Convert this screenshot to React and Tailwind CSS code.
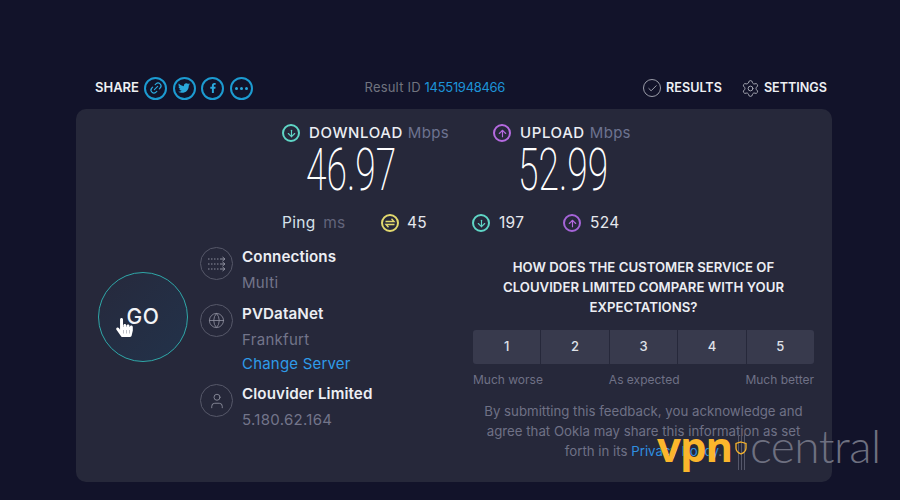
import { Link2, Check, Settings, ArrowDown, ArrowUp, Globe, User } from 'lucide-react';
import { FaTwitter, FaFacebookF, FaHandPointer } from 'react-icons/fa';

const ShareIcon = ({ children }) => (
  <span className="w-[23px] h-[23px] rounded-full border-2 border-[#1c9bd1] flex items-center justify-center text-[#2aa8dc]">
    {children}
  </span>
);

const RoundArrow = ({ color, children }) => (
  <span className={`w-[18px] h-[18px] rounded-full border-2 flex items-center justify-center ${color}`}>
    {children}
  </span>
);

const Detail = ({ icon, title, sub, link, className }) => (
  <div className={`flex gap-[9px] ${className}`}>
    <span className="w-[33px] h-[33px] rounded-full border border-[#565869] flex items-center justify-center text-[#8b8d9c] shrink-0 mt-[1px]">
      {icon}
    </span>
    <div>
      <div className="text-[15.2px] font-semibold text-[#eceef3] leading-[20px] mt-[1px] tracking-[0.1px]">{title}</div>
      <div className="text-[15px] text-[#73758a] leading-[20px] mt-[6px] tracking-[0.3px]">{sub}</div>
      {link && <div className="text-[15px] text-[#2f9be8] leading-[20px] mt-[4px] tracking-[0.2px]">{link}</div>}
    </div>
  </div>
);

const App = () => {
  return (
    <div className="relative w-[900px] h-[500px] overflow-hidden bg-[#12132a] font-['Inter',sans-serif] pt-[73px]">
      <div className="ml-[76px] w-[756px]">
        <div className="flex items-center h-[30px] pl-[19px] pr-[5px] mb-[6px]">
          <span className="text-[13px] font-semibold text-[#eef0f4] w-[49px]">SHARE</span>
          <div className="flex gap-[5.5px]">
            <ShareIcon><Link2 size={14} className="-rotate-45" /></ShareIcon>
            <ShareIcon><FaTwitter size={12} /></ShareIcon>
            <ShareIcon><FaFacebookF size={10} /></ShareIcon>
            <ShareIcon>
              <span className="flex gap-[2px]">
                <i className="w-[3px] h-[3px] rounded-full bg-[#2aa8dc]" />
                <i className="w-[3px] h-[3px] rounded-full bg-[#2aa8dc]" />
                <i className="w-[3px] h-[3px] rounded-full bg-[#2aa8dc]" />
              </span>
            </ShareIcon>
          </div>
          <div className="ml-[112px] text-[13px] text-[#71737f] tracking-[0.2px]">
            Result ID <span className="text-[#1d94d8] -tracking-[0.3px]">14551948466</span>
          </div>
          <div className="ml-auto flex items-center">
            <span className="w-[18px] h-[18px] rounded-full border border-[#9a9ca8] flex items-center justify-center text-[#a9abb5]">
              <Check size={11} />
            </span>
            <span className="ml-[5px] text-[12.6px] font-semibold text-[#eef0f4]">RESULTS</span>
            <Settings size={19} strokeWidth={1.2} className="ml-[19px] text-[#a9abb5]" />
            <span className="ml-[4px] text-[12.6px] font-semibold text-[#eef0f4]">SETTINGS</span>
          </div>
        </div>

        <div className="h-[373px] rounded-[10px] bg-[#26283a] pt-[14px]">
          <div className="flex pl-[206px]">
            <div className="w-[211px]">
              <div className="flex items-center h-[20px]">
                <RoundArrow color="border-[#5fd6c6] text-[#5fd6c6]"><ArrowDown size={11} strokeWidth={2.5} /></RoundArrow>
                <span className="ml-[9px] text-[15px] font-medium text-[#eceef3] tracking-[0.6px]">DOWNLOAD</span>
                <span className="ml-[5px] text-[15px] text-[#6d7390] tracking-[0.3px]">Mbps</span>
              </div>
              <div className="ml-[24px] -mt-[2px] h-[58px] w-[90px] text-[60px] leading-[58px] font-['Roboto',sans-serif] font-extralight text-white origin-left scale-x-[0.62] whitespace-nowrap">46.97</div>
            </div>
            <div>
              <div className="flex items-center h-[20px]">
                <RoundArrow color="border-[#b56ae0] text-[#b56ae0]"><ArrowUp size={11} strokeWidth={2.5} /></RoundArrow>
                <span className="ml-[9px] text-[15px] font-medium text-[#eceef3] tracking-[0.6px]">UPLOAD</span>
                <span className="ml-[5px] text-[15px] text-[#6d7390] tracking-[0.3px]">Mbps</span>
              </div>
              <div className="ml-[25px] -mt-[2px] h-[58px] w-[90px] text-[60px] leading-[58px] font-['Roboto',sans-serif] font-extralight text-white origin-left scale-x-[0.62] whitespace-nowrap">52.99</div>
            </div>
          </div>

          <div className="flex items-center h-[20px] mt-[14px] pl-[206px] text-[15.5px] tracking-[0.3px]">
            <span className="w-[99px] text-[#d6e2ea]">
              Ping <span className="ml-[3px] text-[#62647a]">ms</span>
            </span>
            <span className="w-[91px] flex items-center gap-[8px] text-[#e6e8ee]">
              <RoundArrow color="border-[#e2d96e] text-[#e2d96e]">
                <svg width="12" height="12" viewBox="0 0 12 12" fill="none" stroke="currentColor" strokeWidth="1.4">
                  <path d="M1.500 4.500 H10 L7.500 1.800" />
                  <path d="M10.500 7.500 H2 L4.500 10.200" />
                </svg>
              </RoundArrow>
              45
            </span>
            <span className="w-[91px] flex items-center gap-[9px] text-[#e6e8ee]">
              <RoundArrow color="border-[#5fd6c6] text-[#5fd6c6]"><ArrowDown size={11} strokeWidth={2.5} /></RoundArrow>
              197
            </span>
            <span className="flex items-center gap-[9px] text-[#e6e8ee]">
              <RoundArrow color="border-[#a564d8] text-[#b56ae0]"><ArrowUp size={11} strokeWidth={2.5} /></RoundArrow>
              524
            </span>
          </div>

          <div className="flex mt-[13px]">
            <div className="w-[124px] pl-[22px] pt-[26px] shrink-0">
              <div className="relative w-[90px] h-[90px] rounded-full border border-[#2fa7a8] bg-gradient-to-br from-[#26293c] to-[#22324a] flex items-center justify-center">
                <span className="text-[21px] font-medium text-[#f2f4f7] tracking-[0.5px]">GO</span>
                <FaHandPointer size={19} className="absolute left-[16px] top-[45px] text-white" />
              </div>
            </div>
            <div className="w-[273px] shrink-0">
              <Detail
                icon={
                  <svg width="20" height="16" viewBox="0 0 20 16" fill="none" stroke="currentColor" strokeWidth="1">
                    <path d="M1 3 H14" strokeDasharray="1.500 1.500" />
                    <path d="M14 3 H18 M15.500 1 L18 3 L15.500 5" />
                    <path d="M1 8 H14" strokeDasharray="1.500 1.500" />
                    <path d="M14 8 H18 M15.500 6 L18 8 L15.500 10" />
                    <path d="M1 13 H14" strokeDasharray="1.500 1.500" />
                    <path d="M14 13 H18 M15.500 11 L18 13 L15.500 15" />
                  </svg>
                }
                title="Connections"
                sub="Multi"
              />
              <Detail icon={<Globe size={17} strokeWidth={1.2} />} title="PVDataNet" sub="Frankfurt" link="Change Server" className="mt-[10px]" />
              <Detail icon={<User size={18} strokeWidth={1.2} />} title="Clouvider Limited" sub="5.180.62.164" className="mt-[9px]" />
            </div>
            <div className="w-[341px] shrink-0">
              <div className="mt-[11px] text-center text-[13.2px] font-semibold text-[#eceef3] leading-[20px]">
                HOW DOES THE CUSTOMER SERVICE OF<br />
                CLOUVIDER LIMITED COMPARE WITH YOUR<br />
                EXPECTATIONS?
              </div>
              <div className="mt-[13px] grid grid-cols-5 gap-[1px] h-[34px] rounded-[3px] overflow-hidden">
                {[1, 2, 3, 4, 5].map((n) => (
                  <div key={n} className="bg-[#383a4d] flex items-center justify-center text-[13px] font-medium text-[#dfe1e8]">
                    {n}
                  </div>
                ))}
              </div>
              <div className="mt-[8px] flex justify-between text-[12px] text-[#6f7186] leading-[16px]">
                <span>Much worse</span>
                <span>As expected</span>
                <span>Much better</span>
              </div>
              <div className="mt-[13px] text-center text-[13.25px] text-[#6f7186] leading-[20px]">
                By submitting this feedback, you acknowledge and<br />
                agree that Ookla may share this information as set<br />
                forth in its <span className="text-[#2f8fe0]">Privacy Policy</span>.
              </div>
            </div>
          </div>
        </div>
      </div>

      <div className="absolute left-[657px] top-[421px] flex items-center h-[50px]">
        <span className="text-[42px] leading-none font-bold text-[#fbb62c] font-['Open_Sans',sans-serif] tracking-[-1px]">vpn</span>
        <span className="relative ml-[3px] w-[15px] h-[40px] flex items-center justify-center">
          <i className="absolute left-[3px] top-[4px] h-full w-[1px] bg-[#55576a]" />
          <i className="absolute left-[6px] top-[4px] h-full w-[1px] bg-[#55576a]" />
          <i className="absolute left-[9px] top-[4px] h-full w-[1px] bg-[#55576a]" />
          <svg width="12" height="14" viewBox="0 0 12 14" fill="none" className="absolute left-0 top-[15px]">
            <path d="M6 1 L11 2.500 V7 C11 10 8.500 12 6 13 C3.500 12 1 10 1 7 V2.500 Z" stroke="#fbb62c" strokeWidth="1.300" />
          </svg>
        </span>
        <span className="text-[46px] leading-none font-['Lato',sans-serif] font-light text-[#6e7080] -tracking-[0.5px]">central</span>
      </div>
    </div>
  );
};

export default App;
